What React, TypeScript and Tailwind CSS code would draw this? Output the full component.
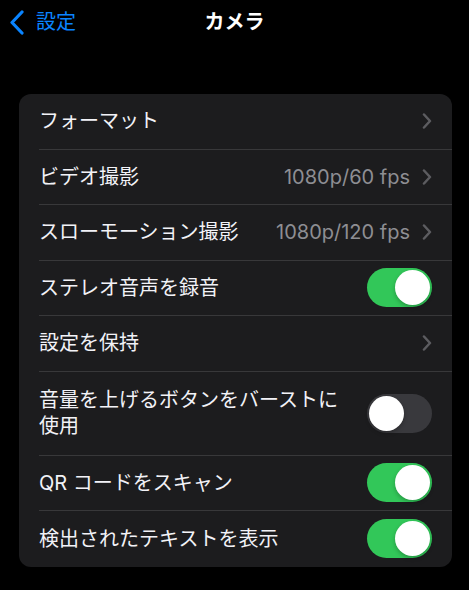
import React from "react";

type Row =
  | { label: string; kind: "link"; value?: string }
  | { label: string; kind: "toggle"; on: boolean };

const rows: Row[] = [
  { label: "フォーマット", kind: "link" },
  { label: "ビデオ撮影", kind: "link", value: "1080p/60 fps" },
  { label: "スローモーション撮影", kind: "link", value: "1080p/120 fps" },
  { label: "ステレオ音声を録音", kind: "toggle", on: true },
  { label: "設定を保持", kind: "link" },
  { label: "音量を上げるボタンをバーストに使用", kind: "toggle", on: false },
  { label: "QR コードをスキャン", kind: "toggle", on: true },
  { label: "検出されたテキストを表示", kind: "toggle", on: true },
];

const Chevron = () => (
  <svg width="10" height="16" viewBox="0 0 10 16" fill="none">
    <path d="M2 1.5 L8 8 L2 14.5" stroke="#5c5c60" strokeWidth="2.5" strokeLinecap="round" strokeLinejoin="round" />
  </svg>
);

const Toggle = ({ on }: { on: boolean }) => (
  <div
    className={`flex h-[39px] w-[65px] shrink-0 items-center rounded-full p-[2px] ${
      on ? "justify-end bg-[#32c759]" : "justify-start bg-[#39393d]"
    }`}
  >
    <div className="h-[35px] w-[35px] rounded-full bg-white shadow-[0_2px_4px_rgba(0,0,0,0.25)]" />
  </div>
);

export default function App() {
  return (
    <div
      className="h-[590px] w-[469px] overflow-hidden bg-black text-white"
      style={{ fontFamily: 'Inter, "Noto Sans CJK JP", sans-serif' }}
    >
      {/* nav bar */}
      <div className="relative flex h-[44px] items-center">
        <div className="flex items-center gap-[11px] pl-[9px] text-[#0a84ff]">
          <svg width="16" height="25" viewBox="0 0 16 25" fill="none">
            <path d="M13 2 L3 12.5 L13 23" stroke="#0a84ff" strokeWidth="3.2" strokeLinecap="round" strokeLinejoin="round" />
          </svg>
          <span className="text-[20px] leading-none">設定</span>
        </div>
        <div className="absolute inset-x-0 top-0 flex h-[44px] items-center justify-center">
          <span className="text-[20px] font-bold leading-none">カメラ</span>
        </div>
      </div>

      {/* settings group */}
      <div className="ml-[19px] mr-[17px] mt-[50px] overflow-hidden rounded-[12px] bg-[#1c1c1e]">
        {rows.map((row, i) => {
          const tall = row.label.length > 14;
          const last = i === rows.length - 1;
          return (
            <div key={row.label} className="flex pl-[20px]">
              <div
                className={`flex flex-1 items-center justify-between gap-4 pr-[20px] ${
                  tall ? "h-[84px]" : "h-[55.5px]"
                } ${last ? "" : "border-b border-[#38383a]"}`}
              >
                <span className="max-w-[310px] text-[20px] leading-[26px] text-[#f2f2f7]">{row.label}</span>
                {row.kind === "link" ? (
                  <div className="flex items-center gap-[12px]">
                    {row.value && <span className="text-[20px] text-[#8e8e93]">{row.value}</span>}
                    <Chevron />
                  </div>
                ) : (
                  <Toggle on={row.on} />
                )}
              </div>
            </div>
          );
        })}
      </div>
    </div>
  );
}
